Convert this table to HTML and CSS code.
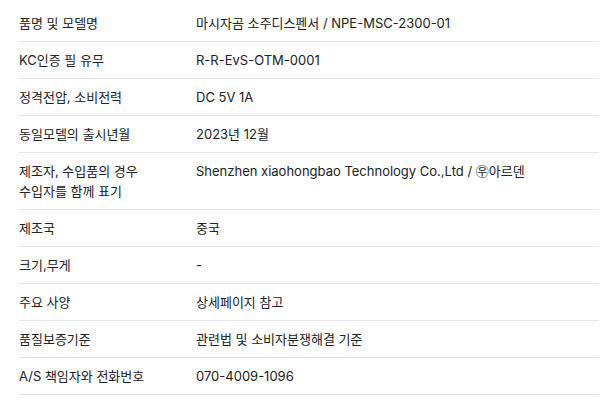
FILE: index.html
```html
<!DOCTYPE html>
<html lang="ko">
<head>
<meta charset="utf-8">
<link rel="stylesheet" href="styles.css">
</head>
<body>
<div class="wrap">
<table class="spec">
<tbody>
<tr><th>품명 및 모델명</th><td>마시자곰 소주디스펜서 / NPE-MSC-2300-01</td></tr>
<tr><th>KC인증 필 유무</th><td>R-R-EvS-OTM-0001</td></tr>
<tr><th>정격전압, 소비전력</th><td>DC 5V 1A</td></tr>
<tr><th>동일모델의 출시년월</th><td>2023년 12월</td></tr>
<tr><th>제조자, 수입품의 경우<br>수입자를 함께 표기</th><td>Shenzhen xiaohongbao Technology Co.,Ltd / ㉾아르덴</td></tr>
<tr><th>제조국</th><td>중국</td></tr>
<tr><th>크기,무게</th><td>-</td></tr>
<tr><th>주요 사양</th><td>상세페이지 참고</td></tr>
<tr><th>품질보증기준</th><td>관련법 및 소비자분쟁해결 기준</td></tr>
<tr><th>A/S 책임자와 전화번호</th><td>070-4009-1096</td></tr>
</tbody>
</table>
</div>
</body>
</html>
```
FILE: styles.css
```css
html, body {
  margin: 0;
  padding: 0;
  background: #fff;
}
body {
  font-family: Inter, "Noto Sans CJK KR", sans-serif;
  font-size: 13px;
  color: #222;
}
.wrap {
  padding: 5px 13px 0 19px;
}
.spec {
  width: 100%;
  border-collapse: collapse;
}
.spec th, .spec td {
  text-align: left;
  vertical-align: top;
  font-weight: 400;
  padding: 8px 0;
  line-height: 20px;
  border-bottom: 1px solid #e8e8e8;
}
.spec th {
  width: 177px;
}
```
